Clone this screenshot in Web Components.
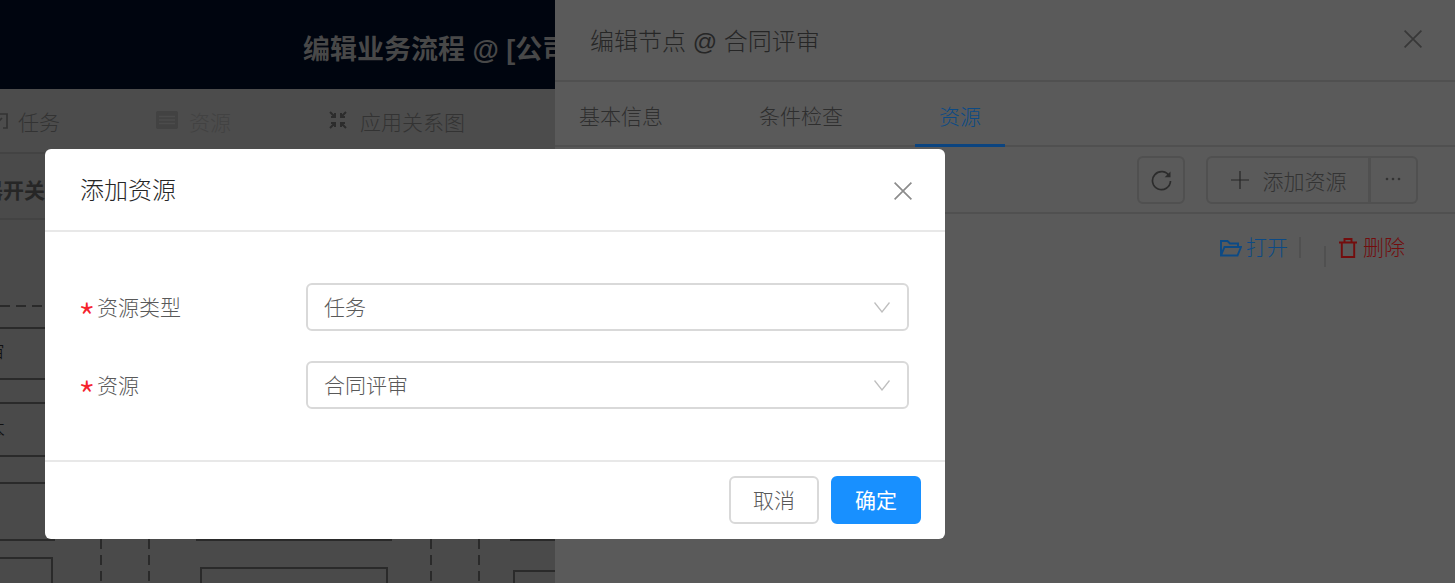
<!DOCTYPE html>
<html lang="zh">
<head>
<meta charset="utf-8">
<title>编辑业务流程</title>
<style>
    html, body { margin: 0; padding: 0; background: #4a4a4a; }
    body {
        font-family: "Liberation Sans", "Noto Sans CJK SC", sans-serif;
        font-size: 21px;
        font-weight: 300;
        line-height: 30px;
    }
</style>
</head>
<body>
<flow-page>
    <flow-work-area slot="work"></flow-work-area>
    <node-drawer slot="drawer" heading="编辑节点 @ 合同评审"></node-drawer>
    <resource-modal slot="modal" heading="添加资源">
        <form-row label="资源类型"><select-box>任务</select-box></form-row>
        <form-row label="资源"><select-box>合同评审</select-box></form-row>
    </resource-modal>
</flow-page>

<script>
const ICONS = {
    close: '<svg width="18" height="18" viewBox="0 0 18 18" fill="none" stroke="currentColor" stroke-width="1.7"><path d="M.6.6l16.8 16.8M17.4.6L.6 17.4"/></svg>',
    chevron: '<svg width="16" height="11" viewBox="0 0 16 11" fill="none" stroke="currentColor" stroke-width="1.3"><path d="M.5.5L8 10l7.5-9.500"/></svg>',
    refresh: '<svg width="21" height="21" viewBox="0 0 21 21" fill="none" stroke="currentColor" stroke-width="1.7"><path d="M18.500 6.500A9 9 0 1 0 19.500 11"/><path d="M19.500 1.500v5.800h-5.800" fill="currentColor" stroke="none"/></svg>',
    plus: '<svg width="18" height="18" viewBox="0 0 18 18" fill="none" stroke="currentColor" stroke-width="1.2"><path d="M9 0v18M0 9h18"/></svg>',
    dots: '<svg width="16" height="4" viewBox="0 0 16 4" fill="currentColor"><circle cx="2" cy="2" r="1.300"/><circle cx="8" cy="2" r="1.300"/><circle cx="14" cy="2" r="1.300"/></svg>',
    folder: '<svg width="22" height="18" viewBox="0 0 22 18" fill="none" stroke="currentColor" stroke-width="1.900"><path d="M1 16.500V2h6.500l2.500 2.500h8V8M1 16.500h16.500L21 8H4.500z"/></svg>',
    trash: '<svg width="18" height="20" viewBox="0 0 18 20" fill="none" stroke="currentColor" stroke-width="1.900"><path d="M0 4.500h18M5.500 4.500V1h7v3.500M2.800 4.500V19h12.400V4.500"/></svg>',
    list: '<svg width="22" height="18" viewBox="0 0 22 18"><rect width="22" height="18" rx="2" fill="#424242"/><path d="M3 5.500h16M3 9h16M3 12.500h16" stroke="#4c4c4c" stroke-width="1.400"/></svg>',
    fit: '<svg width="18" height="18" viewBox="0 0 18 18" fill="none" stroke="#2c2c2c" stroke-width="2"><path d="M1 1l5 5M6 2v4H2M17 1l-5 5M12 2v4h4M1 17l5-5M6 16v-4H2M17 17l-5-5M12 16v-4h4"/></svg>',
    task: '<svg width="22" height="20" viewBox="0 0 22 20" fill="none" stroke="#333" stroke-width="1.700"><path d="M6 4h15v14h-4M10 8l3 3 3-3M13 1v9"/></svg>'
};

class FlowPage extends HTMLElement {
    constructor() {
        super();
        this.attachShadow({ mode: 'open' });
    }

    connectedCallback() {
        this.shadowRoot.innerHTML = `
            <style>
                :host {
                    display: flex;
                    position: relative;
                    width: 1455px;
                    height: 583px;
                    overflow: hidden;
                }
                .modal {
                    position: absolute;
                    left: 45px;
                    top: 149px;
                }
            </style>
            <slot name="work"></slot>
            <slot name="drawer"></slot>
            <div class="modal"><slot name="modal"></slot></div>
        `;
    }
}

class FlowWorkArea extends HTMLElement {
    constructor() {
        super();
        this.attachShadow({ mode: 'open' });
    }

    connectedCallback() {
        this.shadowRoot.innerHTML = `
            <style>
                :host {
                    display: flex;
                    flex-direction: column;
                    flex: 0 0 555px;
                    height: 583px;
                    overflow: hidden;
                    background: #4a4a4a;
                }
                .title-bar {
                    flex: 0 0 89px;
                    box-sizing: border-box;
                    background: #00050f;
                    color: #484848;
                    font-size: 27px;
                    font-weight: 700;
                    line-height: 36px;
                    padding: 32px 0 0 303px;
                    white-space: nowrap;
                }
                .tabs {
                    flex: 0 0 65px;
                    box-sizing: border-box;
                    display: flex;
                    align-items: center;
                    margin-left: -14px;
                    background: #4c4c4c;
                    border-bottom: 2px solid #434343;
                    color: #333;
                    padding-bottom: 2px;
                }
                .tab {
                    display: flex;
                    align-items: center;
                    white-space: nowrap;
                }
                .tab span { padding-top: 6px; }
                .tab svg { margin-right: 10px; }
                .tab.off { margin-left: 96px; color: #424242; }
                .tab.off svg { margin-right: 11px; }
                .tab.fit { margin-left: 98px; }
                .tab.fit svg { margin-right: 13px; }
                .switch-bar {
                    flex: 0 0 66px;
                    box-sizing: border-box;
                    border-bottom: 2px solid #434343;
                    background: #4a4a4a;
                    color: #262626;
                    font-weight: 700;
                    line-height: 30px;
                    padding: 22px 0 0 0;
                    margin-left: -18px;
                    white-space: nowrap;
                }
                .canvas {
                    flex: 1;
                    position: relative;
                    background: #4a4a4a;
                    color: #111;
                    overflow: hidden;
                }
                .canvas div { position: absolute; box-sizing: border-box; }
                .line { height: 2px; background: #2a2a2a; }
                .dash-h { height: 2px; background: repeating-linear-gradient(90deg, #2a2a2a 0 10px, transparent 10px 16px); }
                .dash-v { width: 2px; background: repeating-linear-gradient(180deg, #2a2a2a 0 10px, transparent 10px 16px); }
                .box { border: 2px solid #2a2a2a; }
                .clip { white-space: nowrap; line-height: 24px; }
            </style>
            <div class="title-bar">编辑业务流程 @ [公司合同审批]</div>
            <div class="tabs">
                <div class="tab">${ICONS.task}<span>任务</span></div>
                <div class="tab off">${ICONS.list}<span>资源</span></div>
                <div class="tab fit">${ICONS.fit}<span>应用关系图</span></div>
            </div>
            <div class="switch-bar">器开关</div>
            <div class="canvas">
                <div class="dash-h" style="left:0;top:85px;width:45px"></div>
                <div class="line" style="left:0;top:107px;width:45px"></div>
                <div class="clip" style="left:-16px;top:121px">审</div>
                <div class="line" style="left:0;top:158px;width:45px"></div>
                <div class="line" style="left:0;top:182px;width:45px"></div>
                <div class="clip" style="left:-16px;top:198px">本</div>
                <div class="line" style="left:0;top:235px;width:45px"></div>
                <div class="line" style="left:0;top:262px;width:45px"></div>
                <div class="line" style="left:0;top:319px;width:55px"></div>
                <div class="line" style="left:196px;top:319px;width:196px"></div>
                <div class="line" style="left:510px;top:319px;width:45px"></div>
                <div class="dash-v" style="left:100px;top:319px;height:50px"></div>
                <div class="dash-v" style="left:148px;top:319px;height:50px"></div>
                <div class="dash-v" style="left:430px;top:319px;height:50px"></div>
                <div class="dash-v" style="left:478px;top:319px;height:50px"></div>
                <div class="box" style="left:-10px;top:337px;width:63px;height:60px"></div>
                <div class="box" style="left:200px;top:347px;width:188px;height:60px"></div>
                <div class="box" style="left:513px;top:350px;width:80px;height:60px"></div>
            </div>
        `;
    }
}

class NodeDrawer extends HTMLElement {
    constructor() {
        super();
        this.attachShadow({ mode: 'open' });
    }

    connectedCallback() {
        this.shadowRoot.innerHTML = `
            <style>
                :host {
                    display: flex;
                    flex-direction: column;
                    width: 900px;
                    height: 583px;
                    background: #5a5a5a;
                    color: #2e2e2e;
                }
                header {
                    flex: 0 0 82px;
                    box-sizing: border-box;
                    display: flex;
                    justify-content: space-between;
                    align-items: center;
                    padding: 0 33px 0 35px;
                    border-bottom: 2px solid #505050;
                    color: #262626;
                    font-size: 24px;
                }
                header span { padding-top: 4px; }
                header svg { display: block; color: #383838; margin-top: -2px; }
                nav {
                    flex: 0 0 65px;
                    box-sizing: border-box;
                    display: flex;
                    border-bottom: 2px solid #505050;
                }
                nav span {
                    box-sizing: border-box;
                    height: 65px;
                    margin-bottom: -2px;
                    padding: 20px 24px 0;
                    margin-right: 48px;
                }
                nav span.on {
                    color: #0c4a85;
                    border-bottom: 3px solid #0b4480;
                }
                .toolbar {
                    flex: 0 0 67px;
                    box-sizing: border-box;
                    display: flex;
                    justify-content: flex-end;
                    align-items: flex-start;
                    padding: 9px 37px 0 0;
                    border-bottom: 2px solid #505050;
                }
                .btn {
                    box-sizing: border-box;
                    display: flex;
                    align-items: center;
                    justify-content: center;
                    height: 48px;
                    border: 2px solid #505050;
                    border-radius: 6px;
                    color: #333;
                }
                .refresh { width: 48px; margin-right: 21px; color: #2c2c2c; }
                .add {
                    width: 165px;
                    border-radius: 6px 0 0 6px;
                    border-right-width: 3px;
                    padding-left: 1px;
                }
                .add span { padding-top: 4px; }
                .add svg { margin-right: 14px; color: #262626; }
                .more {
                    width: 48px;
                    margin-left: -1px;
                    border-left: 0;
                    border-radius: 0 6px 6px 0;
                    padding-bottom: 2px;
                }
                .actions {
                    display: flex;
                    align-items: flex-start;
                    justify-content: flex-end;
                    padding: 23px 50px 0 0;
                    line-height: 22px;
                }
                .link { display: flex; align-items: center; }
                .link svg { display: block; margin-right: 6px; }
                .open { color: #0c4a85; }
                .open svg { margin-right: 4px; }
                .del { color: #730d0d; margin-left: 13px; }
                .sep { width: 2px; height: 21px; background: #505050; margin-left: 11px; }
                .sep.low { margin: 9px 0 0 23px; }
            </style>
            <header>
                <span>${this.getAttribute('heading')}</span>
                ${ICONS.close}
            </header>
            <nav>
                <span>基本信息</span>
                <span>条件检查</span>
                <span class="on">资源</span>
            </nav>
            <div class="toolbar">
                <div class="btn refresh">${ICONS.refresh}</div>
                <div class="btn add">${ICONS.plus}<span>添加资源</span></div>
                <div class="btn more">${ICONS.dots}</div>
            </div>
            <div class="actions">
                <div class="link open">${ICONS.folder}<span>打开</span></div>
                <div class="sep"></div>
                <div class="sep low"></div>
                <div class="link del">${ICONS.trash}<span>删除</span></div>
            </div>
        `;
    }
}

class ResourceModal extends HTMLElement {
    constructor() {
        super();
        this.attachShadow({ mode: 'open' });
    }

    connectedCallback() {
        this.shadowRoot.innerHTML = `
            <style>
                :host {
                    display: block;
                    width: 900px;
                    height: 390px;
                    background: #fff;
                    border-radius: 6px;
                    overflow: hidden;
                }
                header {
                    box-sizing: border-box;
                    height: 83px;
                    display: flex;
                    justify-content: space-between;
                    align-items: center;
                    padding: 0 33px 0 35px;
                    border-bottom: 2px solid #e8e8e8;
                    color: #262626;
                    font-size: 24px;
                }
                header span { padding-top: 3px; }
                header svg { display: block; color: #8c8c8c; margin-top: 2px; }
                .body {
                    box-sizing: border-box;
                    height: 228px;
                    display: flex;
                    flex-direction: column;
                    gap: 30px;
                    padding: 51px 36px;
                }
                footer {
                    box-sizing: border-box;
                    height: 79px;
                    display: flex;
                    justify-content: flex-end;
                    gap: 12px;
                    padding: 14px 24px;
                    border-top: 2px solid #e8e8e8;
                }
                button {
                    box-sizing: border-box;
                    width: 90px;
                    height: 48px;
                    padding: 1px 0 0;
                    font: inherit;
                    border-radius: 6px;
                    border: 2px solid #d9d9d9;
                    background: #fff;
                    color: #595959;
                }
                button.primary {
                    border-color: #1890ff;
                    background: #1890ff;
                    color: #fff;
                    font-weight: 400;
                }
            </style>
            <header>
                <span>${this.getAttribute('heading')}</span>
                ${ICONS.close}
            </header>
            <div class="body"><slot></slot></div>
            <footer>
                <button>取消</button>
                <button class="primary">确定</button>
            </footer>
        `;
    }
}

class FormRow extends HTMLElement {
    constructor() {
        super();
        this.attachShadow({ mode: 'open' });
    }

    connectedCallback() {
        this.shadowRoot.innerHTML = `
            <style>
                :host { display: flex; align-items: center; height: 48px; }
                label {
                    flex: 0 0 225px;
                    display: flex;
                    align-items: center;
                    color: #595959;
                    padding-top: 1px;
                }
                i {
                    flex: 0 0 19px;
                    margin: 18px 0 0 -3px;
                    color: #f5222d;
                    font-style: normal;
                    font-family: "Noto Sans CJK SC", sans-serif;
                    font-weight: 300;
                    font-size: 40px;
                    line-height: 24px;
                }
            </style>
            <label><i>*</i>${this.getAttribute('label')}</label>
            <slot></slot>
        `;
    }
}

class SelectBox extends HTMLElement {
    constructor() {
        super();
        this.attachShadow({ mode: 'open' });
    }

    connectedCallback() {
        this.shadowRoot.innerHTML = `
            <style>
                :host {
                    flex: 1;
                    box-sizing: border-box;
                    display: flex;
                    align-items: center;
                    justify-content: space-between;
                    height: 48px;
                    padding: 0 17px 0 16px;
                    border: 2px solid #d9d9d9;
                    border-radius: 6px;
                    background: #fff;
                    color: #595959;
                }
                span { padding-top: 1px; }
                svg { display: block; color: #bfbfbf; }
            </style>
            <span><slot></slot></span>
            ${ICONS.chevron}
        `;
    }
}

customElements.define('flow-page', FlowPage);
customElements.define('flow-work-area', FlowWorkArea);
customElements.define('node-drawer', NodeDrawer);
customElements.define('resource-modal', ResourceModal);
customElements.define('form-row', FormRow);
customElements.define('select-box', SelectBox);
</script>
</body>
</html>
